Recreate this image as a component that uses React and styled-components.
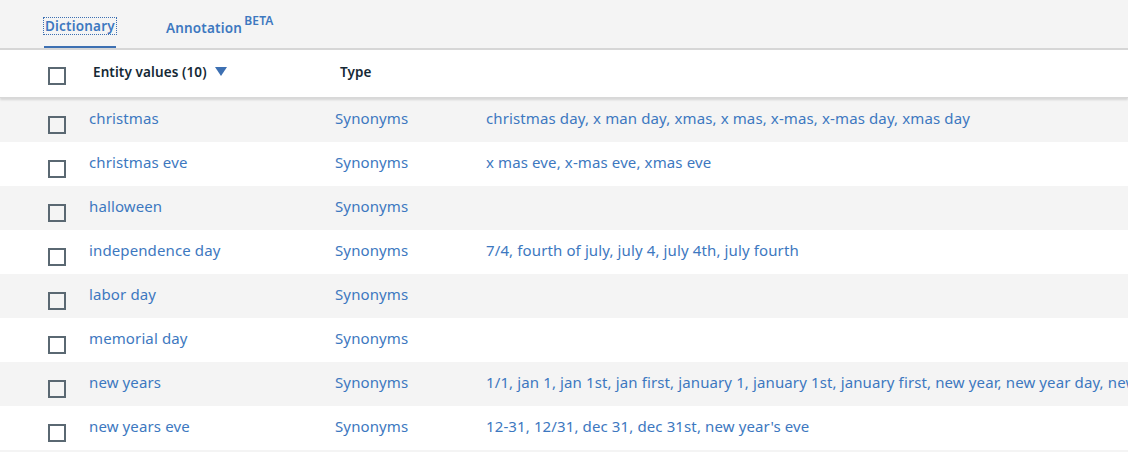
import React from 'react'
import styled, { createGlobalStyle } from 'styled-components'

const GlobalStyle = createGlobalStyle`
body {
  margin: 0;
  background: #f4f4f4;
  font-family: "Noto Sans", "Open Sans", sans-serif;
}
`

const Page = styled.div`
width: 1128px;
height: 452px;
overflow: hidden;
background: #f4f4f4;
`
const Tabs = styled.div`
height: 48px;
display: flex;
align-items: flex-end;
padding-left: 44px;
gap: 49px;
border-bottom: 2px solid #d6d6d6;
`
const Tab = styled.div`
height: 47px;
display: flex;
align-items: center;
padding-top: 4px;
box-sizing: border-box;
font-size: 13.5px;
font-weight: 600;
letter-spacing: 0.2px;
color: #3d78c0;
border-bottom: ${p => (p.$active ? '2px solid #3d70b2' : '2px solid transparent')};
`
const TabLabel = styled.span`
outline: ${p => (p.$focus ? '1px dotted #3d70b2' : 'none')};
line-height: 16px;
padding: 0 1px;
`
const Sup = styled.sup`
font-size: 12px;
margin-left: 2px;
position: relative;
top: -2px;
`
const Table = styled.div`
display: flex;
flex-direction: column;
`
const Row = styled.div`
display: grid;
grid-template-columns: 89px 246px 151px 1fr;
align-items: center;
height: ${p => (p.$head ? '47px' : '44px')};
background: ${p => (p.$head ? '#fff' : p.$odd ? '#f4f4f4' : '#fff')};
box-shadow: ${p => (p.$head ? '0 2px 2px rgba(0,0,0,0.12)' : 'none')};
border-bottom: ${p => (p.$head ? '1px solid #d8d8d8' : 'none')};
position: relative;
z-index: ${p => (p.$head ? 1 : 0)};
white-space: nowrap;
`
const CheckCell = styled.div`
padding-left: 48px;
display: flex;
align-items: center;
padding-top: ${p => (p.$head ? '4px' : '10px')};
`
const Box = styled.span`
width: 14px;
height: 14px;
border: 2px solid #5a6872;
display: block;
`
const HeadCell = styled.div`
font-size: 13.5px;
font-weight: 600;
letter-spacing: 0.1px;
color: #152935;
padding-left: ${p => p.$pad || '0'};
margin-top: -4px;
display: flex;
align-items: center;
gap: 8px;
`
const Cell = styled.div`
font-size: 15px;
letter-spacing: 0.12px;
color: #3d78c0;
overflow: hidden;
margin-top: -5px;
`
const Arrow = styled.span`
width: 0;
height: 0;
border-left: 6px solid transparent;
border-right: 6px solid transparent;
border-top: 9px solid #3d70b2;
`

const rows = [
  ['christmas', 'christmas day, x man day, xmas, x mas, x-mas, x-mas day, xmas day'],
  ['christmas eve', 'x mas eve, x-mas eve, xmas eve'],
  ['halloween', ''],
  ['independence day', '7/4, fourth of july, july 4, july 4th, july fourth'],
  ['labor day', ''],
  ['memorial day', ''],
  ['new years', '1/1, jan 1, jan 1st, jan first, january 1, january 1st, january first, new year, new year day, new years day'],
  ['new years eve', "12-31, 12/31, dec 31, dec 31st, new year's eve"],
]

const App = () => {
  return (
    <Page>
      <GlobalStyle />
      <Tabs>
        <Tab $active>
          <TabLabel $focus>Dictionary</TabLabel>
        </Tab>
        <Tab>
          <TabLabel>
            Annotation<Sup>BETA</Sup>
          </TabLabel>
        </Tab>
      </Tabs>
      <Table>
        <Row $head>
          <CheckCell $head>
            <Box />
          </CheckCell>
          <HeadCell $pad="4px">
            Entity values (10) <Arrow />
          </HeadCell>
          <HeadCell $pad="5px">Type</HeadCell>
          <div />
        </Row>
        {rows.map((r, i) => (
          <Row key={r[0]} $odd={i % 2 === 0}>
            <CheckCell>
              <Box />
            </CheckCell>
            <Cell>{r[0]}</Cell>
            <Cell>Synonyms</Cell>
            <Cell>{r[1]}</Cell>
          </Row>
        ))}
      </Table>
    </Page>
  )
}

export default App
